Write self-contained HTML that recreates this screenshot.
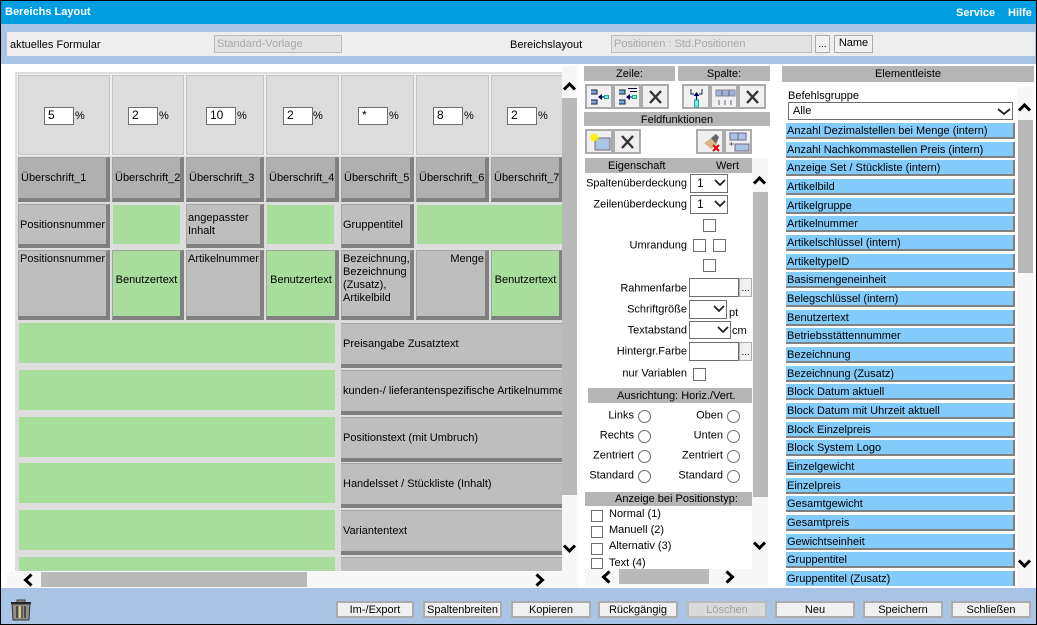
<!DOCTYPE html>
<html lang="de"><head><meta charset="utf-8"><title>Bereichs Layout</title>
<style>
html,body{margin:0;padding:0;background:#fff}
body{width:1037px;height:625px;position:relative;overflow:hidden;font:11px/13px "Liberation Sans",Arial,sans-serif;color:#000}
div,span,svg{position:absolute;box-sizing:border-box}
.t{white-space:nowrap}
.r{white-space:nowrap;text-align:right;left:0;transform:translateY(-50%);margin-top:1px}
.hd{background:#B5B5B5;text-align:center;line-height:17px;white-space:nowrap}
.pc{background:#DCDCDC;border:1px solid #C4C4C4;box-shadow:0 0 0 1px #F0F0F0;top:3px;height:80px}
.in{background:#fff;border:1px solid #6e6e6e;height:18px;top:31px;padding-left:3px;line-height:15px;font-size:12px;width:30px}
.pct{top:34px;font-size:11px}
.h{background:#B0B0B0;border:1px solid #A4A4A4;border-right:4px solid #808080;border-bottom:4px solid #808080;padding:0 0 0 2px;white-space:nowrap;overflow:hidden;line-height:40px}
.l{background:#BEBEBE;border:1px solid #A4A4A4;border-right:4px solid #808080;border-bottom:4px solid #808080;padding:0 0 0 1px;overflow:hidden}
.gr{background:#A9DD9B}
.gs{background:#A9DD9B;border:1px solid #A4A4A4;border-right:4px solid #808080;border-bottom:4px solid #808080;text-align:center;white-space:nowrap;overflow:hidden}
.w{left:326px;width:221px;height:45px;background:#BEBEBE;border-top:1px solid #A4A4A4;border-bottom:4px solid #808080;white-space:nowrap;overflow:hidden;padding-left:2px;line-height:41px}
.b{background:#F0F0F0;border:2px solid #ABABAB;width:28px;height:25px}
.cb{background:#fff;border:1px solid #6e6e6e;width:13px;height:13px}
.sel{background:#fff;border:1px solid #6e6e6e;height:19px;font-size:12px;line-height:16px;padding-left:6px}
.inp{background:#fff;border:1px solid #6e6e6e;width:50px;height:19px;left:689px}
.dots{background:#F0F0F0;border:1px solid #ABABAB;left:739px;width:13px;height:19px;font-size:10px;text-align:center;line-height:19px}
.rd{width:13px;height:13px;border:1px solid #6e6e6e;border-radius:50%;background:#fff}
.btn{background:#F0F0F0;border:2px solid #ABABAB;top:601px;height:17px;text-align:center;line-height:15px;white-space:nowrap}
.e{left:786px;width:229px;height:16px;background:#82CBFA;border-right:2px solid #808080;border-bottom:2px solid #808080;padding-left:1px;line-height:16px;white-space:nowrap}
.sb{background:#F7F7F7}
.th{background:#B9B9B9}
.ar{fill:none;stroke:#000;stroke-width:3}
</style></head><body>
<div style="left:0;top:0;width:1037px;height:625px;background:#fff"></div>
<div style="left:0;top:0;width:1037px;height:24px;background:#009EE0"></div>
<div style="left:0;top:24px;width:1037px;height:40px;background:#A9C4E4"></div>
<div style="left:7px;top:32px;width:1028px;height:24px;background:#EEEEEE"></div>
<div class="t" style="left:5px;top:5px;color:#fff;font-weight:bold;margin-top:1px">Bereichs Layout</div>
<div class="t" style="left:956px;top:6px;color:#fff;font-weight:bold;margin-top:1px">Service</div>
<div class="t" style="left:1008px;top:6px;color:#fff;font-weight:bold;margin-top:1px">Hilfe</div>
<div class="t" style="left:10px;top:39px">aktuelles Formular</div>
<div class="t" style="left:214px;top:35px;width:128px;height:18px;background:#E3E3E3;border:1px solid #BDBDBD;color:#A9A9A9;padding-left:2px;line-height:17px">Standard-Vorlage</div>
<div class="t" style="left:510px;top:39px">Bereichslayout</div>
<div class="t" style="left:611px;top:35px;width:201px;height:18px;background:#E3E3E3;border:1px solid #BDBDBD;color:#A9A9A9;padding-left:2px;line-height:17px">Positionen : Std.Positionen</div>
<div style="left:815px;top:35px;width:15px;height:18px;background:#F0F0F0;border:1px solid #ABABAB;text-align:center;font-size:10px;line-height:18px">...</div>
<div style="left:834px;top:35px;width:39px;height:18px;background:#F0F0F0;border:1px solid #ABABAB;text-align:center;line-height:15px">Name</div>

<!-- grid -->
<div style="left:15px;top:72px;width:547px;height:499px;background:#DDDDDD;overflow:hidden">
 <div class="pc" style="left:3px;width:92px"><div class="in" style="left:25px">5</div><span class="pct" style="left:56px">%</span></div>
 <div class="pc" style="left:97px;width:72px"><div class="in" style="left:15px">2</div><span class="pct" style="left:46px">%</span></div>
 <div class="pc" style="left:171px;width:78px"><div class="in" style="left:19px">10</div><span class="pct" style="left:50px">%</span></div>
 <div class="pc" style="left:251px;width:73px"><div class="in" style="left:16px">2</div><span class="pct" style="left:46px">%</span></div>
 <div class="pc" style="left:326px;width:73px"><div class="in" style="left:16px">*</div><span class="pct" style="left:47px">%</span></div>
 <div class="pc" style="left:401px;width:73px"><div class="in" style="left:16px">8</div><span class="pct" style="left:47px">%</span></div>
 <div class="pc" style="left:476px;width:72px"><div class="in" style="left:15px">2</div><span class="pct" style="left:46px">%</span></div>

 <div class="h" style="left:3px;top:85px;width:92px;height:45px">Überschrift_1</div>
 <div class="h" style="left:97px;top:85px;width:72px;height:45px">Überschrift_2</div>
 <div class="h" style="left:171px;top:85px;width:78px;height:45px">Überschrift_3</div>
 <div class="h" style="left:251px;top:85px;width:73px;height:45px">Überschrift_4</div>
 <div class="h" style="left:326px;top:85px;width:73px;height:45px">Überschrift_5</div>
 <div class="h" style="left:401px;top:85px;width:73px;height:45px">Überschrift_6</div>
 <div class="h" style="left:476px;top:85px;width:72px;height:45px">Überschrift_7</div>

 <div class="l" style="left:3px;top:132px;width:92px;height:44px;line-height:40px">Positionsnummer</div>
 <div class="gr" style="left:98px;top:133px;width:67px;height:39px"></div>
 <div class="l" style="left:171px;top:132px;width:78px;height:44px;padding-top:7px">angepasster Inhalt</div>
 <div class="gr" style="left:252px;top:133px;width:67px;height:39px"></div>
 <div class="l" style="left:326px;top:132px;width:73px;height:44px;line-height:40px">Gruppentitel</div>
 <div class="gr" style="left:402px;top:133px;width:145px;height:39px"></div>

 <div class="l" style="left:3px;top:178px;width:92px;height:70px;padding-top:2px">Positionsnummer</div>
 <div class="gs" style="left:97px;top:178px;width:72px;height:70px;line-height:58px">Benutzertext</div>
 <div class="l" style="left:171px;top:178px;width:78px;height:70px;padding-top:2px">Artikelnummer</div>
 <div class="gs" style="left:251px;top:178px;width:73px;height:70px;line-height:58px">Benutzertext</div>
 <div class="l" style="left:326px;top:178px;width:73px;height:70px;padding-top:2px">Bezeichnung, Bezeichnung (Zusatz), Artikelbild</div>
 <div class="l" style="left:401px;top:178px;width:73px;height:70px;padding-top:2px;text-align:right;padding-right:1px">Menge</div>
 <div class="gs" style="left:476px;top:178px;width:72px;height:70px;line-height:58px">Benutzertext</div>

 <div class="gr" style="left:4px;top:251px;width:316px;height:40px"></div>
 <div class="w" style="top:251px">Preisangabe Zusatztext</div>
 <div class="gr" style="left:4px;top:298px;width:316px;height:40px"></div>
 <div class="w" style="top:298px">kunden-/ lieferantenspezifische Artikelnummer</div>
 <div class="gr" style="left:4px;top:345px;width:316px;height:40px"></div>
 <div class="w" style="top:345px">Positionstext (mit Umbruch)</div>
 <div class="gr" style="left:4px;top:391px;width:316px;height:40px"></div>
 <div class="w" style="top:391px">Handelsset / Stückliste (Inhalt)</div>
 <div class="gr" style="left:4px;top:438px;width:316px;height:40px"></div>
 <div class="w" style="top:438px">Variantentext</div>
 <div class="gr" style="left:4px;top:485px;width:316px;height:40px"></div>
 <div class="w" style="top:485px"></div>
</div>
<div class="sb" style="left:7px;top:572px;width:570px;height:16px"></div>
<div class="th" style="left:41px;top:572px;width:266px;height:15px"></div>
<svg style="left:21px;top:573px" width="14" height="14"><path class="ar" d="M10.500 1.500L4.500 7L10.500 12.500"/></svg>
<svg style="left:533px;top:573px" width="14" height="14"><path class="ar" d="M3.500 1.500L9.500 7L3.500 12.500"/></svg>
<div class="sb" style="left:562px;top:66px;width:15px;height:522px"></div>
<div class="th" style="left:562px;top:98px;width:15px;height:397px"></div>
<svg style="left:563px;top:79px" width="14" height="14"><path class="ar" d="M1 10.500L6.500 5L12 10.500"/></svg>
<svg style="left:563px;top:542px" width="14" height="14"><path class="ar" d="M1 3.500L6.500 9L12 3.500"/></svg>

<!-- middle panel -->
<div class="hd" style="left:584px;top:66px;width:91px;height:15px">Zeile:</div>
<div class="hd" style="left:678px;top:66px;width:92px;height:15px">Spalte:</div>
<div class="b" style="left:585px;top:84px"><svg style="left:3px;top:2px" width="20" height="18"><path d="M1 2h6v4H1M1 12h6v4H1" fill="#7FA6DA" stroke="#123"/><path d="M9 9h5" fill="none" stroke="#003" stroke-width="1.200"/><path d="M8 9l4-3v6z" fill="#006"/><rect x="14.500" y="7.500" width="4" height="3" fill="#7EE" stroke="#2A8"/></svg></div>
<div class="b" style="left:613px;top:84px"><svg style="left:3px;top:1px" width="21" height="19"><path d="M1 3h6v4H1M1 13h6v4H1" fill="#7FA6DA" stroke="#123"/><path d="M9 10h5M10 1.500h9M12 4.500h7" fill="none" stroke="#003" stroke-width="1"/><path d="M8 10l4-3v6z" fill="#006"/><rect x="14.500" y="8.500" width="4" height="3" fill="#7EE" stroke="#2A8"/></svg></div>
<div class="b" style="left:641px;top:84px"><svg style="left:5px;top:4px" width="15" height="14"><path d="M2 1L13 13M13 1L2 13" stroke="#333" stroke-width="2.400" fill="none"/></svg></div>
<div class="b" style="left:682px;top:84px"><svg style="left:4px;top:2px" width="18" height="20"><path d="M3 1v5h3M11 6h3V1" fill="none" stroke="#123"/><path d="M8.500 8v5" fill="none" stroke="#003" stroke-width="1.200"/><path d="M8.500 4l-3 4h6z" fill="#006"/><rect x="6.500" y="12" width="4" height="7" fill="#7EE" stroke="#2A8"/></svg></div>
<div class="b" style="left:710px;top:84px"><svg style="left:3px;top:3px" width="21" height="17"><rect x="1" y="1" width="19" height="6" fill="#9DB4D8" stroke="#889"/><path d="M7 1v6M14 1v6M4 11v5M10 11v5M16 11v5" stroke="#667" fill="none"/></svg></div>
<div class="b" style="left:738px;top:84px"><svg style="left:5px;top:4px" width="15" height="14"><path d="M2 1L13 13M13 1L2 13" stroke="#333" stroke-width="2.400" fill="none"/></svg></div>
<div class="hd" style="left:584px;top:112px;width:186px;height:14px;line-height:16px">Feldfunktionen</div>
<div class="b" style="left:585px;top:129px"><svg style="left:2px;top:2px" width="23" height="19"><rect x="6" y="5" width="15" height="12" fill="#A9C4E4" stroke="#756880"/><path d="M5 0v9M1 4.500h9M2 1.500l6 6M8 1.500l-6 6" stroke="#FFF000" stroke-width="1.800"/></svg></div>
<div class="b" style="left:613px;top:129px"><svg style="left:5px;top:4px" width="15" height="14"><path d="M2 1L13 13M13 1L2 13" stroke="#333" stroke-width="2.400" fill="none"/></svg></div>
<div class="b" style="left:696px;top:129px"><svg style="left:3px;top:1px" width="21" height="20"><path d="M3 11l7-5 6 6-6 5z" fill="#D8B88A"/><path d="M10 6l5-4 3 3-3 7z" fill="#666"/><path d="M12 13l6 6M18 13l-6 6" stroke="#E00" stroke-width="2"/></svg></div>
<div class="b" style="left:724px;top:129px"><svg style="left:2px;top:1px" width="22" height="20"><rect x="2" y="1" width="8" height="7" fill="#A9C4E4" stroke="#756880"/><rect x="10" y="1" width="8" height="7" fill="#A9C4E4" stroke="#756880"/><rect x="7" y="12" width="14" height="7" fill="#A9C4E4" stroke="#756880"/><path d="M1 12h5M3.500 10v4" stroke="#756880"/></svg></div>

<div style="left:585px;top:158px;width:167px;height:15px;background:#B5B5B5;line-height:17px"><span style="left:23px">Eigenschaft</span><span style="left:131px">Wert</span></div>
<div class="sb" style="left:752px;top:158px;width:16px;height:428px"></div>
<div class="th" style="left:753px;top:192px;width:15px;height:305px"></div>
<svg style="left:753px;top:173px" width="14" height="14"><path class="ar" d="M1 10.500L6.500 5L12 10.500"/></svg>
<svg style="left:753px;top:539px" width="14" height="14"><path class="ar" d="M1 3.500L6.500 9L12 3.500"/></svg>

<div class="r" style="width:687px;top:183px">Spaltenüberdeckung</div>
<div class="sel" style="left:690px;top:174px;width:38px">1<svg style="left:23px;top:3px" width="12" height="10"><path d="M1 2L6 7L11 2" fill="none" stroke="#222" stroke-width="1.800"/></svg></div>
<div class="r" style="width:687px;top:204px">Zeilenüberdeckung</div>
<div class="sel" style="left:690px;top:195px;width:38px">1<svg style="left:23px;top:3px" width="12" height="10"><path d="M1 2L6 7L11 2" fill="none" stroke="#222" stroke-width="1.800"/></svg></div>
<div class="cb" style="left:703px;top:219px"></div>
<div class="r" style="width:687px;top:245px">Umrandung</div>
<div class="cb" style="left:693px;top:239px"></div>
<div class="cb" style="left:713px;top:239px"></div>
<div class="cb" style="left:703px;top:259px"></div>
<div class="r" style="width:687px;top:288px">Rahmenfarbe</div>
<div class="inp" style="top:278px"></div><div class="dots" style="top:278px">...</div>
<div class="r" style="width:687px;top:309px">Schriftgröße</div>
<div class="sel" style="left:689px;top:300px;width:38px"><svg style="left:23px;top:3px" width="12" height="10"><path d="M1 2L6 7L11 2" fill="none" stroke="#222" stroke-width="1.800"/></svg></div>
<div class="t" style="left:729px;top:307px">pt</div>
<div class="r" style="width:687px;top:330px">Textabstand</div>
<div class="sel" style="left:689px;top:321px;width:42px;height:18px"><svg style="left:27px;top:3px" width="12" height="10"><path d="M1 2L6 7L11 2" fill="none" stroke="#222" stroke-width="1.800"/></svg></div>
<div class="t" style="left:732px;top:325px">cm</div>
<div class="r" style="width:687px;top:351px">Hintergr.Farbe</div>
<div class="inp" style="top:342px"></div><div class="dots" style="top:342px">...</div>
<div class="r" style="width:687px;top:373px">nur Variablen</div>
<div class="cb" style="left:693px;top:368px"></div>

<div style="left:588px;top:388px;width:164px;height:15px;background:#B5B5B5;line-height:17px"><span class="t" style="left:29px">Ausrichtung: Horiz./Vert.</span></div>
<div class="r" style="width:634px;top:415px">Links</div><div class="rd" style="left:638px;top:410px"></div>
<div class="r" style="width:723px;top:415px">Oben</div><div class="rd" style="left:727px;top:410px"></div>
<div class="r" style="width:634px;top:435px">Rechts</div><div class="rd" style="left:638px;top:430px"></div>
<div class="r" style="width:723px;top:435px">Unten</div><div class="rd" style="left:727px;top:430px"></div>
<div class="r" style="width:634px;top:455px">Zentriert</div><div class="rd" style="left:638px;top:450px"></div>
<div class="r" style="width:723px;top:455px">Zentriert</div><div class="rd" style="left:727px;top:450px"></div>
<div class="r" style="width:634px;top:475px">Standard</div><div class="rd" style="left:638px;top:470px"></div>
<div class="r" style="width:723px;top:475px">Standard</div><div class="rd" style="left:727px;top:470px"></div>

<div style="left:585px;top:492px;width:167px;height:14px;background:#B5B5B5;line-height:14px"><span class="t" style="left:30px">Anzeige bei Positionstyp:</span></div>
<div class="cb" style="left:591px;top:510px;width:12px;height:12px"></div><div class="t" style="left:609px;top:508px">Normal (1)</div>
<div class="cb" style="left:591px;top:526px;width:12px;height:12px"></div><div class="t" style="left:609px;top:524px">Manuell (2)</div>
<div class="cb" style="left:591px;top:543px;width:12px;height:12px"></div><div class="t" style="left:609px;top:540px">Alternativ (3)</div>
<div class="cb" style="left:591px;top:558px;width:12px;height:11px"></div><div class="t" style="left:609px;top:557px;height:12px;overflow:hidden">Text (4)</div>
<div class="sb" style="left:585px;top:569px;width:167px;height:17px"></div>
<div class="th" style="left:619px;top:569px;width:90px;height:15px"></div>
<svg style="left:599px;top:570px" width="14" height="14"><path class="ar" d="M10.500 1.500L4.500 7L10.500 12.500"/></svg>
<svg style="left:723px;top:570px" width="14" height="14"><path class="ar" d="M3.500 1.500L9.500 7L3.500 12.500"/></svg>

<!-- right panel -->
<div class="hd" style="left:782px;top:66px;width:252px;height:16px;line-height:17px">Elementleiste</div>
<div class="t" style="left:788px;top:90px">Befehlsgruppe</div>
<div class="sel" style="left:788px;top:102px;width:225px;height:18px;padding-left:4px;font-size:11px;line-height:17px">Alle<svg style="left:208px;top:4px" width="14" height="10"><path d="M1 2L7 7L13 2" fill="none" stroke="#222" stroke-width="1.800"/></svg></div>
<div class="e" style="top:123px">Anzahl Dezimalstellen bei Menge (intern)</div>
<div class="e" style="top:142px">Anzahl Nachkommastellen Preis (intern)</div>
<div class="e" style="top:160px">Anzeige Set / Stückliste (intern)</div>
<div class="e" style="top:179px">Artikelbild</div>
<div class="e" style="top:198px">Artikelgruppe</div>
<div class="e" style="top:216px">Artikelnummer</div>
<div class="e" style="top:235px">Artikelschlüssel (intern)</div>
<div class="e" style="top:254px">ArtikeltypeID</div>
<div class="e" style="top:272px">Basismengeneinheit</div>
<div class="e" style="top:291px">Belegschlüssel (intern)</div>
<div class="e" style="top:310px">Benutzertext</div>
<div class="e" style="top:328px">Betriebsstättennummer</div>
<div class="e" style="top:347px">Bezeichnung</div>
<div class="e" style="top:366px">Bezeichnung (Zusatz)</div>
<div class="e" style="top:384px">Block Datum aktuell</div>
<div class="e" style="top:403px">Block Datum mit Uhrzeit aktuell</div>
<div class="e" style="top:422px">Block Einzelpreis</div>
<div class="e" style="top:440px">Block System Logo</div>
<div class="e" style="top:459px">Einzelgewicht</div>
<div class="e" style="top:478px">Einzelpreis</div>
<div class="e" style="top:496px">Gesamtgewicht</div>
<div class="e" style="top:515px">Gesamtpreis</div>
<div class="e" style="top:534px">Gewichtseinheit</div>
<div class="e" style="top:552px">Gruppentitel</div>
<div class="e" style="top:571px;height:15px;border-bottom:0">Gruppentitel (Zusatz)</div>
<div class="sb" style="left:1017px;top:86px;width:16px;height:502px"></div>
<div class="th" style="left:1018px;top:120px;width:15px;height:153px"></div>
<svg style="left:1018px;top:100px" width="14" height="14"><path class="ar" d="M1 10.500L6.500 5L12 10.500"/></svg>
<svg style="left:1018px;top:557px" width="14" height="14"><path class="ar" d="M1 3.500L6.500 9L12 3.500"/></svg>

<!-- bottom -->
<div style="left:0;top:588px;width:1037px;height:36px;background:#A9C4E4"></div>
<svg style="left:10px;top:598px" width="22" height="24"><path d="M1 4h20v2H1z" fill="#222"/><path d="M7 4V2h8v2" fill="#888" stroke="#444"/><path d="M2 6h18l-1 16H3z" fill="#8E8E8E" stroke="#333"/><path d="M7 8v12M15 8v12" stroke="#333" stroke-width="1.500"/><path d="M10 8v12" stroke="#EEE860" stroke-width="1.500"/><path d="M12 8v12" stroke="#333"/></svg>
<div class="btn" style="left:336px;width:78px">Im-/Export</div>
<div class="btn" style="left:423px;width:79px">Spaltenbreiten</div>
<div class="btn" style="left:511px;width:80px">Kopieren</div>
<div class="btn" style="left:598px;width:80px">Rückgängig</div>
<div class="btn" style="left:687px;width:80px;background:#DADADA;border-color:#BBB;color:#A0A0A0">Löschen</div>
<div class="btn" style="left:775px;width:80px">Neu</div>
<div class="btn" style="left:863px;width:80px">Speichern</div>
<div class="btn" style="left:951px;width:80px">Schließen</div>
<div style="left:0;top:0;width:1037px;height:625px;border:1px solid #000"></div>
</body></html>
